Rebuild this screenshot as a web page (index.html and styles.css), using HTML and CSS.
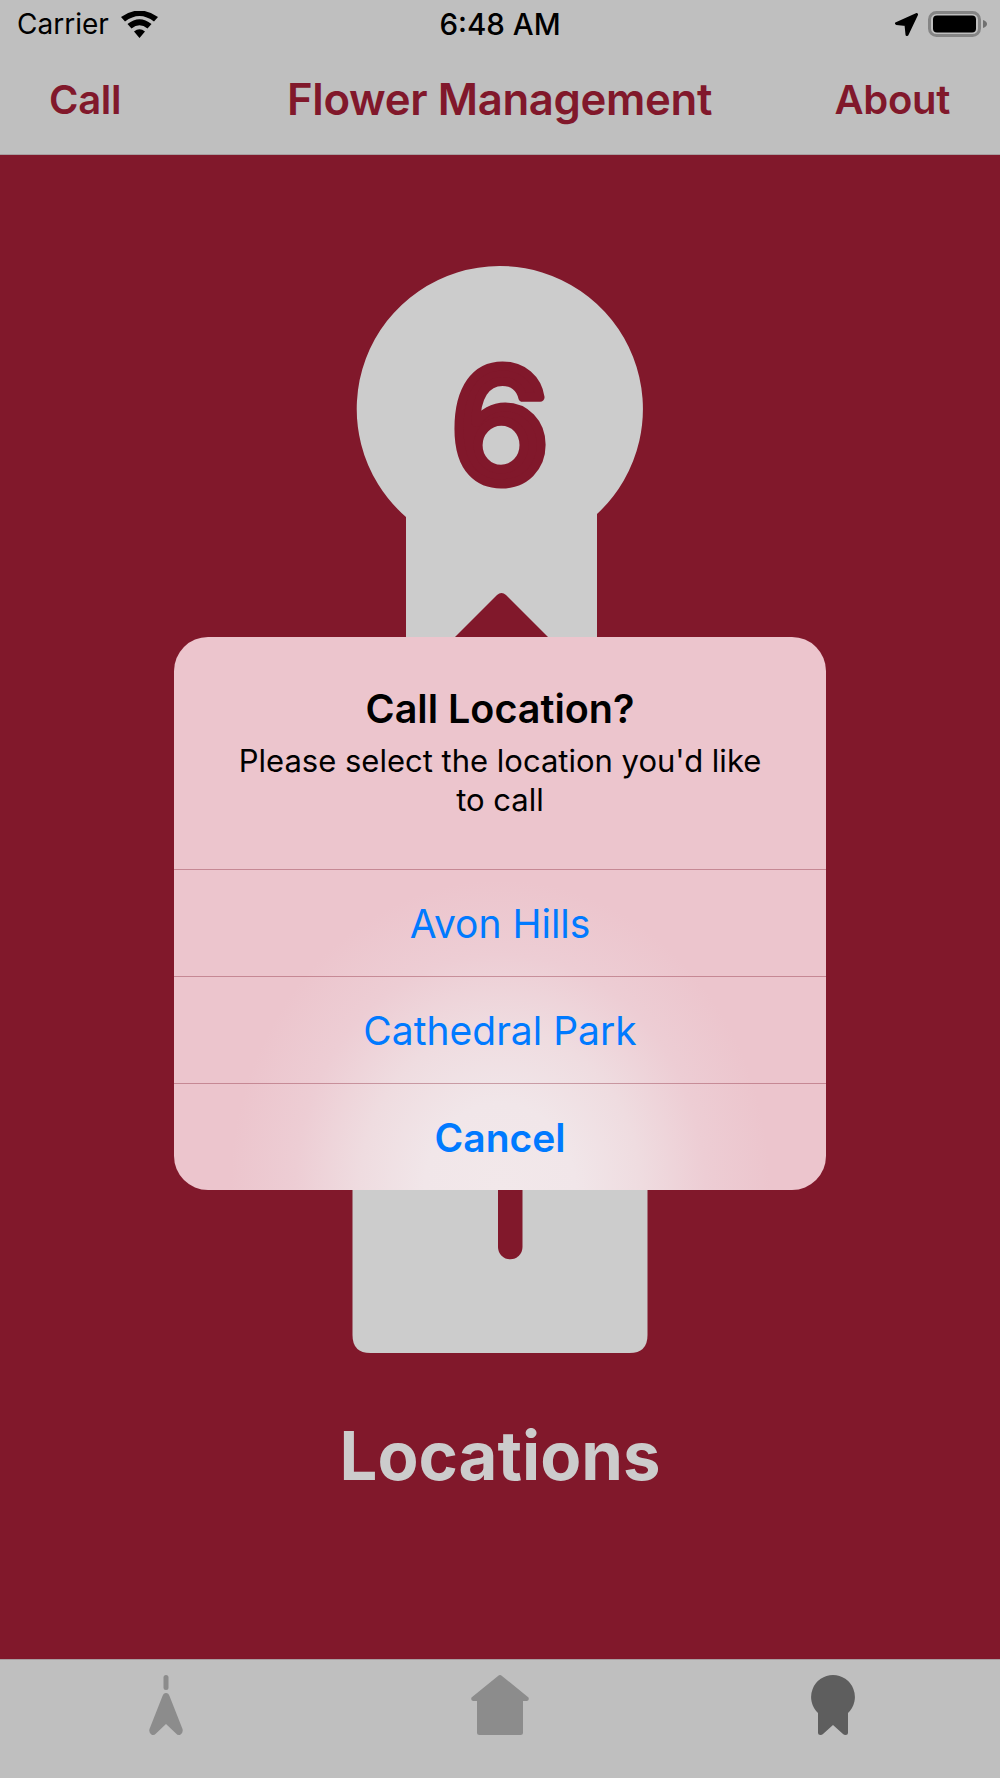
FILE: index.html
```html
<!DOCTYPE html>
<html lang="en">
<head>
<meta charset="utf-8">
<title>Flower Management</title>
<link rel="stylesheet" href="styles.css">
</head>
<body>
<div class="app">
  <header class="top">
    <div class="status">
      <div class="status-left">
        <span>Carrier</span>
        <svg class="wifi" viewBox="0 0 37 27"><path d="M18.500 27 L13 20.500 Q18.500 16 24 20.500 Z M10.500 17.500 L6.500 13 Q18.500 3.500 30.500 13 L26.500 17.500 Q18.500 11 10.500 17.500 Z M4 10.500 L0 6 Q18.500 -7 37 6 L33 10.500 Q18.500 -.5 4 10.500 Z"/></svg>
      </div>
      <div class="status-time">6:48 AM</div>
      <div class="status-right">
        <svg class="arrow" viewBox="0 0 23 23"><path d="M21.500 1.500 L1.500 10.500 L11 11.500 L12 21.500 Z"/></svg>
        <svg class="battery" viewBox="0 0 59 26"><rect x="1.500" y="1.500" width="50" height="23" rx="7" fill="none" stroke="#858585" stroke-width="3"/><rect x="5" y="4.500" width="43" height="17" rx="4"/><path d="M55 9 Q59 10.500 59 13 Q59 15.500 55 17 Z" fill="#707070"/></svg>
      </div>
    </div>
    <nav class="nav">
      <span class="nav-link">Call</span>
      <span class="nav-title">Flower Management</span>
      <span class="nav-link nav-link-right">About</span>
    </nav>
  </header>

  <main class="main">
    <svg class="badge" viewBox="0 0 300 1090">
      <path class="badge-shape" d="M150 0 A143 143 0 0 1 247 248 V860 H56 V251 A143 143 0 0 1 150 0 Z"/>
      <path class="badge-shape" d="M2.500 870 H297.500 V1069 Q297.500 1087 279.500 1087 H20.500 Q2.500 1087 2.500 1069 Z"/>
      <path class="badge-cut" d="M105 371 L147 329 Q151.500 325 156 329 L198 371 V380 H105 Z"/>
      <path class="badge-cut" d="M148 870 H172.500 V981 A12.250 12.250 0 0 1 148 981 Z"/>
      <text class="badge-num" x="150" y="216" text-anchor="middle">6</text>
    </svg>
    <h1 class="section-title">Locations</h1>
  </main>

  <footer class="tabs">
    <svg class="tab-icon tab-nav" viewBox="0 0 34 61"><rect x="14.500" y="0" width="5" height="15" rx="2.500"/><path d="M17 18 Q19.500 18 20.500 21 L33.500 54 Q34.500 58 31 60 Q28.500 60.500 27 58.500 L17 49 L7 58.500 Q5.500 60.500 3 60 Q-.5 58 .5 54 L13.500 21 Q14.500 18 17 18 Z"/></svg>
    <svg class="tab-icon tab-home" viewBox="0 0 58 60"><path d="M29 0 Q30 0 31 1 L57.500 22.500 Q58.500 25.500 56 26 H52 V57.500 Q52 60 49.500 60 H8.500 Q6 60 6 57.500 V26 H2 Q-.5 25.500 .5 22.500 L27 1 Q28 0 29 0 Z"/></svg>
    <svg class="tab-icon tab-medal" viewBox="0 0 44 60"><path d="M22 0 A22 22 0 0 1 37 38 V57.500 Q37 60 34.500 60 Q33 60 32 59 L22 50 L12 59 Q11 60 9.500 60 Q7 60 7 57.500 V38 A22 22 0 0 1 22 0 Z"/></svg>
  </footer>

  <section class="dialog">
    <div class="dialog-head">
      <h2 class="dialog-title">Call Location?</h2>
      <p class="dialog-msg">Please select the location you'd like to call</p>
    </div>
    <div class="dialog-btn">Avon Hills</div>
    <div class="dialog-btn">Cathedral Park</div>
    <div class="dialog-btn dialog-btn-strong">Cancel</div>
  </section>
</div>
</body>
</html>
```

FILE: styles.css
```css
* { box-sizing: border-box; }
html, body { margin: 0; padding: 0; }
body { font-family: Inter, "Liberation Sans", sans-serif; background: #81182b; }
.app { position: relative; width: 1000px; height: 1778px; display: flex; flex-direction: column; overflow: hidden; }

.top { height: 155px; background: #bfbfbf; border-bottom: 1px solid #a89da0; flex: none; }
.status { height: 48px; display: grid; grid-template-columns: 1fr auto 1fr; align-items: center; padding: 0 13px; font-size: 28px; color: #000; }
.status-left { display: flex; align-items: center; gap: 12px; padding-left: 4px; }
.status-time { font-weight: 500; font-size: 29.500px; }
.status-right { display: flex; align-items: center; justify-content: flex-end; gap: 10px; }
.wifi { width: 37px; height: 27px; }
.arrow { width: 23px; height: 23px; stroke: #000; stroke-width: 3px; stroke-linejoin: round; }
.battery { width: 59px; height: 26px; }

.nav { height: 102px; display: grid; grid-template-columns: 1fr auto 1fr; align-items: center; padding: 0 50px 0 49px; color: #81182b; font-size: 40px; font-weight: 500; }
.nav-title { font-weight: 600; font-size: 43.700px; letter-spacing: -.35px; }
.nav-link { font-weight: 600; letter-spacing: -.3px; }
.nav-link-right { text-align: right; }

.main { flex: 1; display: flex; flex-direction: column; align-items: center; padding-top: 111px; }
.badge { width: 300px; height: 1090px; flex: none; }
.badge-shape { fill: #cccccc; }
.badge-cut { fill: #81182b; }
.badge-num { fill: #81182b; stroke: #81182b; stroke-width: 9px; stroke-linejoin: round; font-family: Inter, sans-serif; font-weight: 500; font-size: 158px; }
.section-title { margin: 60px 0 0; color: #cccccc; font-size: 67px; line-height: 80px; font-weight: 700; }

.tabs { position: relative; height: 119px; flex: none; background: #bfbfbf; border-top: 1px solid #a89da0; }
.tab-icon { position: absolute; display: block; }
.tab-nav { left: 149px; top: 15px; width: 34px; height: 61px; fill: #8c8c8c; }
.tab-home { left: 471px; top: 15px; width: 58px; height: 60px; fill: #8c8c8c; }
.tab-medal { left: 811px; top: 15px; width: 44px; height: 60px; fill: #5e5e5e; }

.dialog { position: absolute; left: 174px; top: 637px; width: 652px; height: 553px; border-radius: 34px; overflow: hidden; color: #000;
  background: radial-gradient(ellipse 270px 310px at 50% 100%, #f2e8ea 0%, #f1e6e9 28%, #efdce0 52%, #edcdd4 76%, #ecc5cd 100%), #ecc5cd; }
.dialog-head { height: 232px; padding: 46px 50px 0; text-align: center; }
.dialog-title { margin: 0; font-size: 39.500px; line-height: 52px; font-weight: 600; }
.dialog-msg { margin: 6px 0 0; font-size: 31px; line-height: 39px; }
.dialog-btn { height: 107px; border-top: 1px solid rgba(128, 23, 42, .35); display: flex; align-items: center; justify-content: center; color: #007aff; font-size: 39px; }
.dialog-btn-strong { font-weight: 600; }
```
